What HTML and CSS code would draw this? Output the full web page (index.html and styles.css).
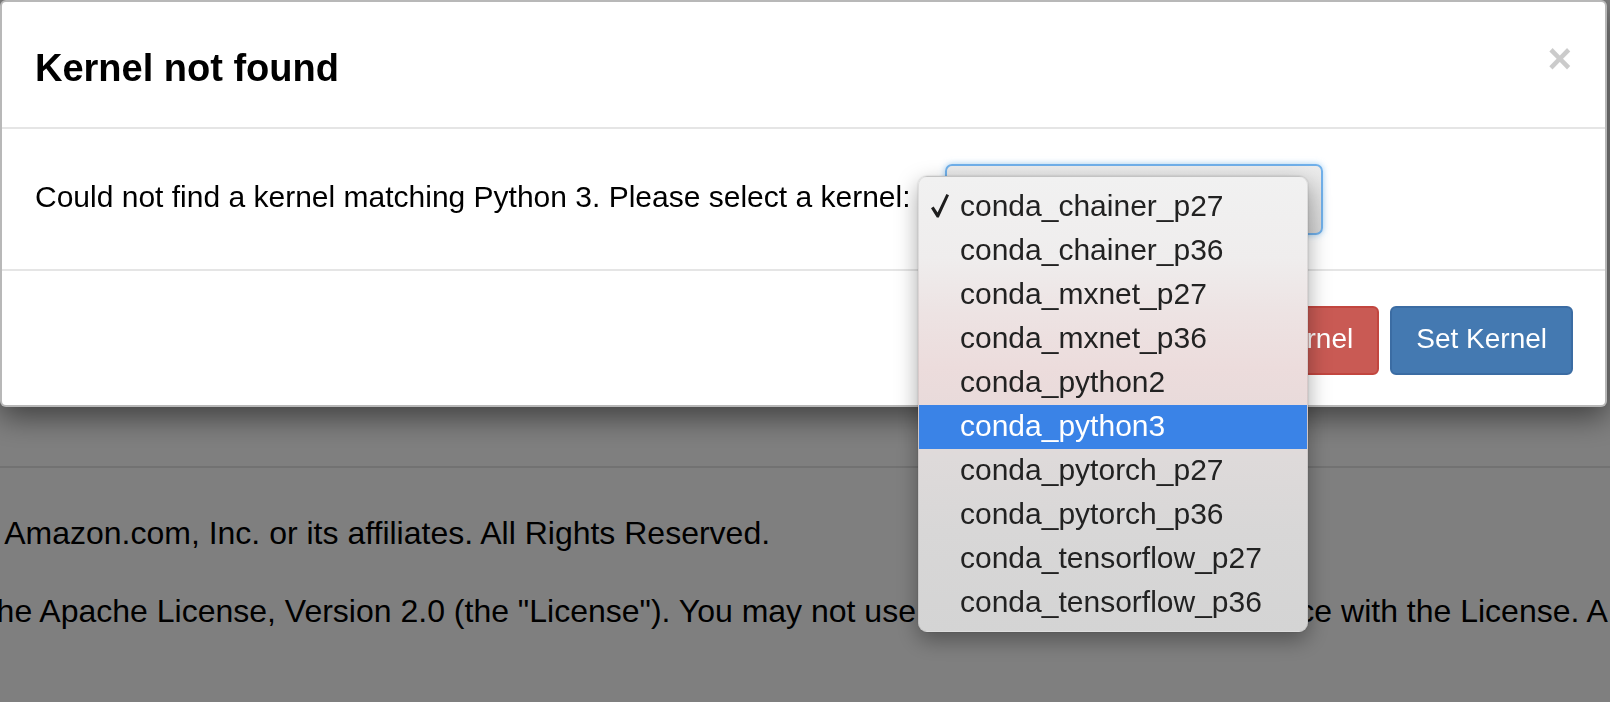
FILE: index.html
```html
<!DOCTYPE html>
<html lang="en">
<head>
<meta charset="utf-8">
<title>Kernel not found</title>
<link rel="stylesheet" href="styles.css">
</head>
<body>
  <div class="page">
    <hr class="rule">
    <div class="license">
      <p class="line line-1">Copyright 2017 Amazon.com, Inc. or its affiliates. All Rights Reserved.</p>
      <p class="line line-2">Licensed under the Apache License, Version 2.0 (the "License"). You may not use this file except in compliance with the License. A copy of the License is located at</p>
    </div>
  </div>

  <div class="backdrop"></div>

  <div class="modal">
    <div class="modal-content">
      <div class="modal-header">
        <h4 class="modal-title">Kernel not found</h4>
        <span class="close">&times;</span>
      </div>
      <div class="modal-body">
        <span class="prompt">Could not find a kernel matching Python 3. Please select a kernel:</span>
        <div class="select"><span class="select-value">conda_python3</span></div>
      </div>
      <div class="modal-footer">
        <button class="btn btn-danger">Continue Without Kernel</button>
        <button class="btn btn-primary">Set Kernel</button>
      </div>
    </div>

    <ul class="menu">
      <li class="item checked">
        <svg class="check" viewBox="0 0 18 24" width="18" height="24"><path d="M0 14.2 L2.6 12.6 L6.6 18.6 L15.4 0 L18 1.3 L7.8 23.6 L5.8 23.6 Z" fill="#1e1e1e"/></svg>
        conda_chainer_p27
      </li>
      <li class="item">conda_chainer_p36</li>
      <li class="item">conda_mxnet_p27</li>
      <li class="item">conda_mxnet_p36</li>
      <li class="item">conda_python2</li>
      <li class="item active">conda_python3</li>
      <li class="item">conda_pytorch_p27</li>
      <li class="item">conda_pytorch_p36</li>
      <li class="item">conda_tensorflow_p27</li>
      <li class="item">conda_tensorflow_p36</li>
    </ul>
  </div>
</body>
</html>
```

FILE: styles.css
```css
html, body {
  margin: 0;
  padding: 0;
}

body {
  width: 1610px;
  height: 702px;
  overflow: hidden;
  background: #ffffff;
  font-family: "Liberation Sans", Arial, Helvetica, sans-serif;
  color: #000;
}

/* ---------- underlying page ---------- */
.page {
  padding-top: 466px;
}

.rule {
  margin: 0;
  border: 0;
  border-top: 2px solid #e4e4e4;
}

.license {
  margin-left: -230px;
  padding-top: 44px;
}

.line {
  margin: 0 0 36px;
  font-size: 32px;
  line-height: 42px;
  white-space: nowrap;
}

.line-1 {
  text-indent: 10px;
}

.line-2 {
  text-indent: -10px;
}

.backdrop {
  position: fixed;
  inset: 0;
  background: rgba(0, 0, 0, 0.5);
}

/* ---------- modal ---------- */
.modal {
  position: fixed;
  top: 0;
  left: 0;
  width: 1607px;
}

.modal-content {
  background: #fff;
  border: 2px solid rgba(0, 0, 0, 0.28);
  border-radius: 6px;
  box-shadow: 0 10px 30px rgba(0, 0, 0, 0.5);
}

.modal-header {
  display: flex;
  justify-content: space-between;
  align-items: flex-start;
  padding: 44px 33px 37px 33px;
  border-bottom: 2px solid #e5e5e5;
}

.modal-title {
  margin: 0;
  font-size: 38px;
  line-height: 44px;
  font-weight: 700;
  color: #000;
}

.close {
  margin-top: -8px;
  font-size: 42px;
  line-height: 42px;
  font-weight: 700;
  color: #000;
  opacity: 0.2;
}

.modal-body {
  display: flex;
  align-items: flex-start;
  padding: 35px 33px 34px 33px;
  border-bottom: 2px solid #e5e5e5;
}

.prompt {
  margin-top: 12px;
  font-size: 30px;
  line-height: 42px;
  white-space: nowrap;
}

.select {
  margin-left: 34px;
  width: 378px;
  height: 71px;
  box-sizing: border-box;
  border: 2px solid #70b0ea;
  border-radius: 7px;
  background: linear-gradient(#ececec, #d6d6d6);
  box-shadow: 0 0 6px rgba(102, 175, 233, 0.6);
  font-size: 28px;
  line-height: 67px;
  padding-left: 20px;
  color: #333;
}

.modal-footer {
  display: flex;
  justify-content: flex-end;
  gap: 11px;
  padding: 35px 32px 30px 32px;
}

.btn {
  height: 69px;
  box-sizing: border-box;
  padding: 0 24px 4px;
  border: 2px solid transparent;
  border-radius: 6px;
  font-family: "Liberation Sans", Arial, Helvetica, sans-serif;
  font-size: 28px;
  line-height: 61px;
  color: #fff;
}

.btn-danger {
  background: #c95a54;
  border-color: #c2463f;
}

.btn-primary {
  background: #4479b1;
  border-color: #3b6ca3;
}

/* ---------- native popup menu ---------- */
.menu {
  position: absolute;
  top: 176px;
  left: 918px;
  width: 390px;
  height: 456px;
  box-sizing: border-box;
  margin: 0;
  padding: 8px 0;
  list-style: none;
  border-radius: 9px;
  border: 1px solid rgba(0, 0, 0, 0.08);
  background: linear-gradient(180deg,
    #f1f1f1 0%,
    #efeded 18%,
    #ede3e3 30%,
    #ecdcdc 42%,
    #e8dada 52%,
    #dedada 62%,
    #d8d7d7 78%,
    #d4d4d4 100%);
  box-shadow: 0 8px 22px rgba(0, 0, 0, 0.35), 0 0 2px rgba(0, 0, 0, 0.2);
  overflow: hidden;
}

.item {
  position: relative;
  height: 44px;
  box-sizing: border-box;
  padding: 0 0 2px 41px;
  font-size: 30px;
  line-height: 42px;
  color: #222;
  white-space: nowrap;
}

.item.active {
  background: #3a83e7;
  color: #fff;
}

.check {
  position: absolute;
  left: 12px;
  top: 9px;
}
```
